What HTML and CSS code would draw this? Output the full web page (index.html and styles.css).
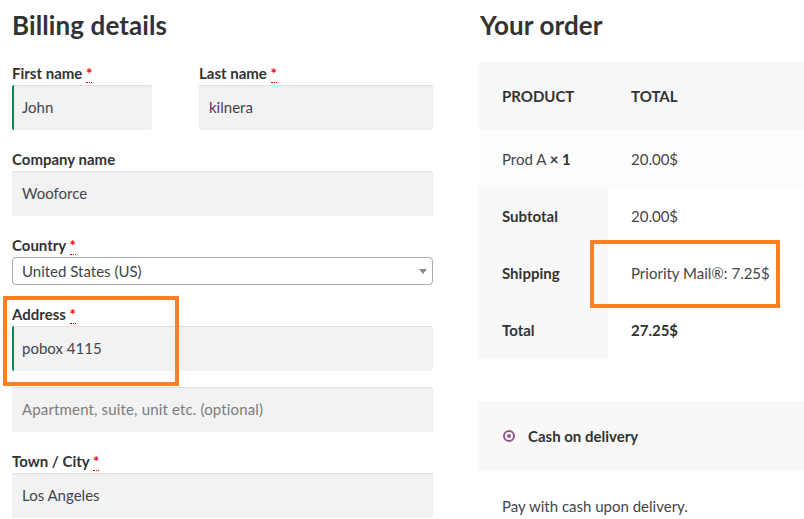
FILE: index.html
```html
<!DOCTYPE html>
<html>
<head>
<meta charset="utf-8">
<link rel="stylesheet" href="styles.css">
</head>
<body>
<div class="page">
  <div class="billing">
    <h3 class="title">Billing details</h3>
    <div class="row two">
      <div class="field first">
        <label>First name <abbr>*</abbr></label>
        <div class="input valid">John</div>
      </div>
      <div class="field last">
        <label>Last name <abbr>*</abbr></label>
        <div class="input">kilnera</div>
      </div>
    </div>
    <div class="field">
      <label>Company name</label>
      <div class="input">Wooforce</div>
    </div>
    <div class="field">
      <label>Country <abbr>*</abbr></label>
      <div class="select">United States (US)<span class="arrow"></span></div>
    </div>
    <div class="field">
      <label>Address <abbr>*</abbr></label>
      <div class="input valid">pobox 4115</div>
      <div class="input placeholder second">Apartment, suite, unit etc. (optional)</div>
    </div>
    <div class="field">
      <label>Town / City <abbr>*</abbr></label>
      <div class="input">Los Angeles</div>
    </div>
  </div>
  <div class="order">
    <h3 class="title">Your order</h3>
    <table class="review">
      <thead>
        <tr><th class="c1">Product</th><th class="c2">Total</th></tr>
      </thead>
      <tbody>
        <tr class="item"><td class="c1">Prod A <strong>&times;&nbsp;1</strong></td><td class="c2">20.00$</td></tr>
      </tbody>
      <tfoot>
        <tr><th class="c1">Subtotal</th><td class="c2">20.00$</td></tr>
        <tr><th class="c1">Shipping</th><td class="c2">Priority Mail&reg;: 7.25$</td></tr>
        <tr><th class="c1">Total</th><td class="c2"><strong>27.25$</strong></td></tr>
      </tfoot>
    </table>
    <div class="payment">
      <span class="radio"><span class="dot"></span></span>
      <span class="method">Cash on delivery</span>
    </div>
    <p class="desc">Pay with cash upon delivery.</p>
  </div>
  <div class="mark mark-address"></div>
  <div class="mark mark-shipping"></div>
</div>
</body>
</html>
```
FILE: styles.css
```css
* { box-sizing: border-box; }
html, body { margin: 0; padding: 0; background: #fff; }
body {
  font-family: Lato, "Liberation Sans", sans-serif;
  font-size: 15px;
  color: #43454b;
  overflow: hidden;
  width: 804px;
  height: 519px;
}
.page {
  position: relative;
  display: flex;
  gap: 46px;
  padding-left: 12px;
  width: 804px;
  height: 519px;
  overflow: hidden;
}
.billing { width: 421px; flex: none; }
.order { width: 360px; flex: none; }
.title {
  margin: 0;
  height: 61px;
  padding-top: 8px;
  font-size: 26px;
  line-height: 34px;
  font-weight: 700;
  color: #333;
  letter-spacing: 0.1px;
}
.order .title { padding-left: 1px; }
.row.two { display: flex; gap: 47px; }
.field.first { width: 140px; }
.field.last { width: 234px; }
.field { margin-bottom: 17px; }
label {
  display: block;
  height: 24px;
  line-height: 24px;
  font-weight: 700;
  font-size: 15px;
  color: #333;
}
abbr {
  color: #e00;
  text-decoration: none;
  border-bottom: 1px dotted #e00;
  line-height: 1;
}
.input {
  height: 45px;
  background: #f2f2f2;
  padding: 0 10px;
  line-height: 45px;
  font-size: 15px;
  color: #43454b;
  box-shadow: inset 0 1px 1px rgba(0,0,0,0.08);
  border-radius: 2px;
}
.input.valid { border-left: 2px solid #0f834d; padding-left: 8px; }
.input.placeholder { color: #7b7c80; letter-spacing: 0.15px; }
.input.second { margin-top: 16px; }
.select {
  position: relative;
  height: 28px;
  line-height: 26px;
  border: 1px solid #aaa;
  border-radius: 4px;
  padding-left: 9px;
  background: #fff;
  color: #444;
  font-size: 15px;
}
.arrow {
  position: absolute;
  right: 5px;
  top: 11px;
  border-left: 4px solid transparent;
  border-right: 4px solid transparent;
  border-top: 5px solid #888;
}
.review {
  border-collapse: collapse;
  width: 360px;
}
.review th, .review td {
  text-align: left;
  padding: 0 0 0 23px;
  font-size: 15px;
  height: 57px;
  vertical-align: middle;
}
.review .c1 { width: 129px; }
.review thead th {
  background: #f8f8f8;
  height: 69px;
  text-transform: uppercase;
  font-weight: 700;
  color: #333;
}
.review tbody td { background: #fdfdfd; }
.review tfoot th { background: #f8f8f8; font-weight: 700; color: #333; }
.review tfoot td { background: #fff; }
.review strong { font-weight: 700; color: #333; }
.payment {
  margin-top: 43px;
  height: 69px;
  background: #f8f8f8;
  display: flex;
  align-items: center;
  padding-left: 24px;
}
.radio {
  width: 12px;
  height: 12px;
  border: 2px solid #96588a;
  border-radius: 50%;
  display: flex;
  align-items: center;
  justify-content: center;
  margin-right: 13px;
}
.dot { width: 4px; height: 4px; border-radius: 50%; background: #96588a; }
.method { font-weight: 700; color: #333; font-size: 15px; }
.desc { margin: 25px 0 0 23px; font-size: 15px; line-height: 22px; }
.mark {
  position: absolute;
  border: 4px solid #fd7f26;
}
.mark-address { left: 3px; top: 296px; width: 176px; height: 90px; }
.mark-shipping { left: 590px; top: 240px; width: 190px; height: 68px; }
```
